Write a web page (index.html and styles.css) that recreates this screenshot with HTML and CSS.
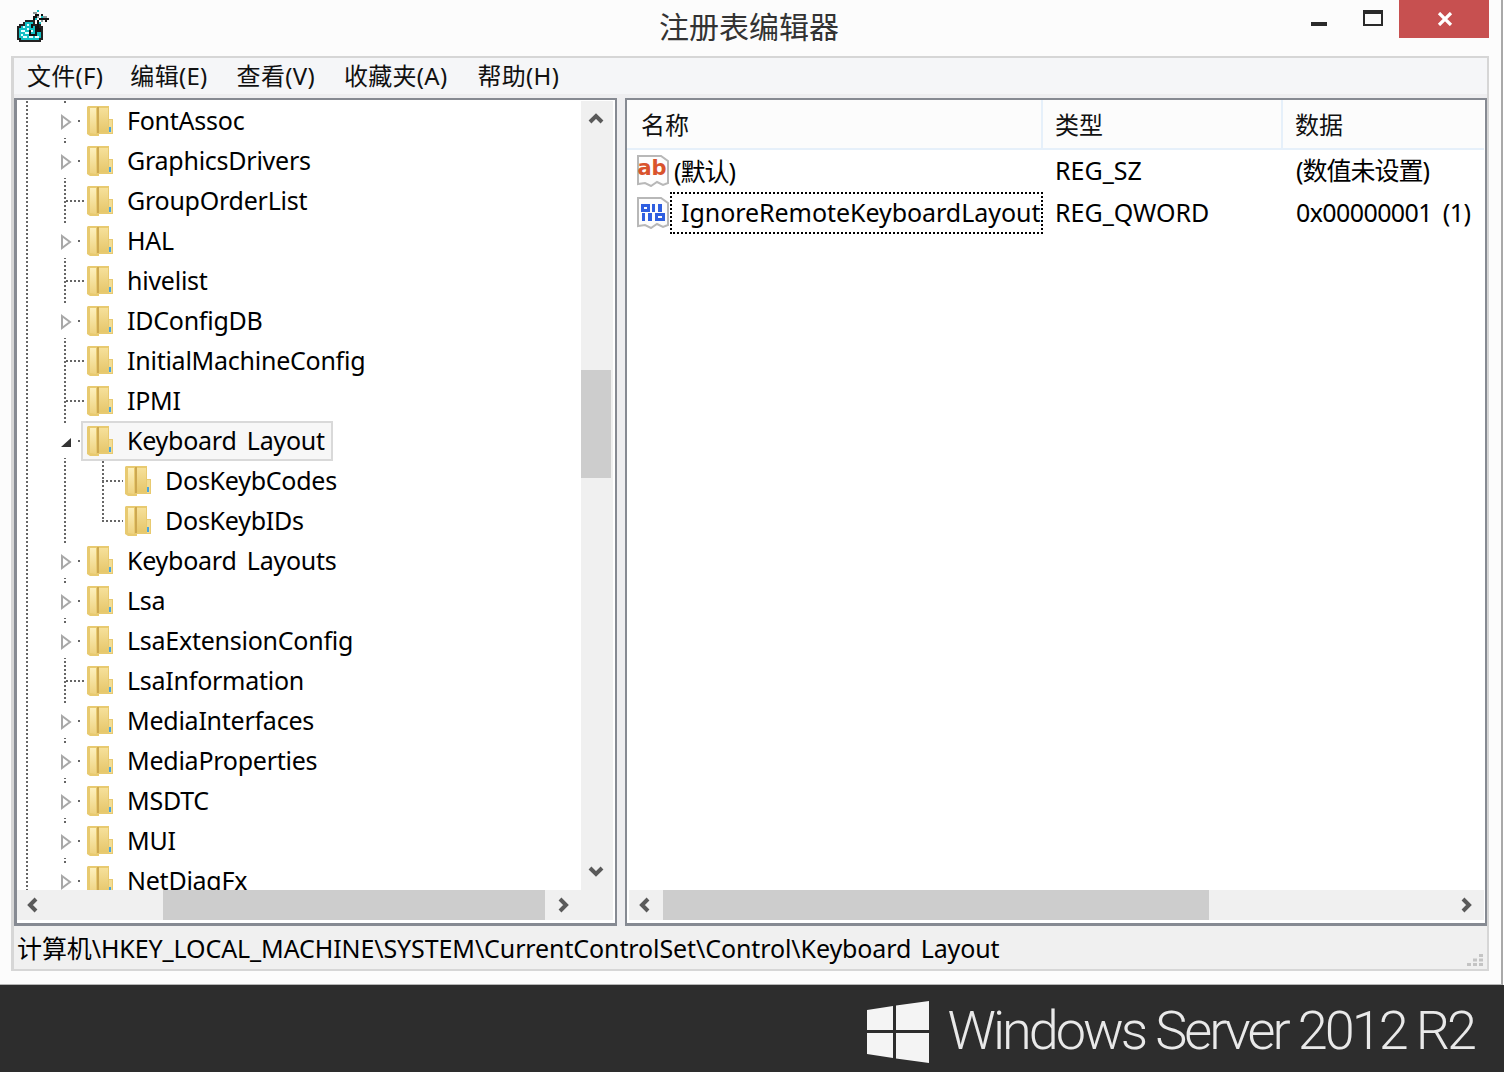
FILE: index.html
```html
<!DOCTYPE html>
<html lang="zh-CN">
<head>
<meta charset="utf-8">
<title>注册表编辑器</title>
<link rel="stylesheet" href="styles.css">
</head>
<body>
<svg class="defs" width="0" height="0" aria-hidden="true">
  <defs>
    <linearGradient id="fa" x1="0" y1="0" x2="0" y2="1"><stop offset="0" stop-color="#fdf0bd"/><stop offset="1" stop-color="#eed27f"/></linearGradient>
    <linearGradient id="fc" x1="0" y1="0" x2="0" y2="1"><stop offset="0" stop-color="#f6e09a"/><stop offset="1" stop-color="#e6c76b"/></linearGradient>
    <symbol id="folder" viewBox="0 0 26 32">
      <path d="M1 1H22V14H26V29H12V31H3L0 29V2Z" fill="#e8ca70"/>
      <path d="M3 3H9V29L3 28Z" fill="url(#fa)"/>
      <path d="M10 2H12V28H10Z" fill="#cda850"/>
      <path d="M12 3H21V27H12Z" fill="url(#fc)"/>
      <path d="M22 15H25V28H22Z" fill="#f3dc92"/>
      <path d="M22 22H24V27H22Z" fill="#4aa6dc"/>
    </symbol>
    <symbol id="tri" viewBox="0 0 12 16"><path d="M2 2L10 8L2 14Z" fill="#fff" stroke="#a8a8a8" stroke-width="2"/></symbol>
    <symbol id="page" viewBox="0 0 32 32">
      <path d="M1 1H24L31 6V28L26 30L20 27L14 31L8 28L1 29Z" fill="#fdfdfd" stroke="#b8b8b8" stroke-width="2"/>
    </symbol>
  </defs>
</svg>

<div class="window">
  <header class="titlebar">
    <div class="appicon">
      <svg width="32" height="32" viewBox="0 0 32 32" shape-rendering="crispEdges">
        <path d="M8 10H18V14H24V16H26V30H24V32H2V30H0V16H2V14H6V12H8Z" fill="#222"/>
        <path d="M8 12H16V16H22V18H24V28H22V30H4V28H2V18H4V16H8Z" fill="#10c0c4"/>
        <path d="M6 16H8V18H6ZM10 14H12V16H10ZM4 20H8V22H4ZM10 18H12V20H10ZM8 22H12V24H8ZM4 24H6V26H4ZM12 26H16V28H12ZM6 26H10V28H6ZM14 20H16V22H14ZM18 26H22V28H18Z" fill="#e6ffff"/>
        <path d="M12 20H14V24H18V16H20V10H22V18H24V22H20V26H12ZM14 14H16V18H14Z" fill="#111"/>
        <path d="M16 2H20V4H16ZM20 6H22V8H20ZM26 6H30V8H26ZM24 10H26V12H24Z" fill="#8d9a9a"/>
        <path d="M18 4H22V6H18ZM16 6H20V10H16ZM24 4H26V6H24ZM26 8H32V10H26ZM22 8H26V10H22ZM28 10H30V12H28Z" fill="#111"/>
        <path d="M20 0H22V2H20ZM18 8H20V10H18ZM24 6H26V8H24ZM22 12H24V14H22Z" fill="#10c0c4"/>
      </svg>
    </div>
    <h1 class="title">注册表编辑器</h1>
    <div class="controls">
      <span class="ctl-min"></span>
      <span class="ctl-max"></span>
      <span class="ctl-close">
        <svg width="16" height="14" viewBox="0 0 16 14"><path d="M2 1L14 13M14 1L2 13" stroke="#fff" stroke-width="3.200" fill="none"/></svg>
      </span>
    </div>
  </header>

  <div class="frame">
    <nav class="menubar">
      <span class="menu m1">文件(F)</span>
      <span class="menu m2">编辑(E)</span>
      <span class="menu m3">查看(V)</span>
      <span class="menu m4">收藏夹(A)</span>
      <span class="menu m5">帮助(H)</span>
    </nav>
    <div class="panes">
      <section class="pane tree-pane">
        <div class="tree">
          <div class="row"><span class="exp"><svg class="tri"><use href="#tri"/></svg></span><span class="stub"></span><span class="node"><svg class="folder"><use href="#folder"/></svg><span>FontAssoc</span></span></div>
          <div class="row"><span class="exp"><svg class="tri"><use href="#tri"/></svg></span><span class="stub"></span><span class="node"><svg class="folder"><use href="#folder"/></svg><span>GraphicsDrivers</span></span></div>
          <div class="row leaf"><span class="stub"></span><span class="node"><svg class="folder"><use href="#folder"/></svg><span>GroupOrderList</span></span></div>
          <div class="row"><span class="exp"><svg class="tri"><use href="#tri"/></svg></span><span class="stub"></span><span class="node"><svg class="folder"><use href="#folder"/></svg><span>HAL</span></span></div>
          <div class="row leaf"><span class="stub"></span><span class="node"><svg class="folder"><use href="#folder"/></svg><span>hivelist</span></span></div>
          <div class="row"><span class="exp"><svg class="tri"><use href="#tri"/></svg></span><span class="stub"></span><span class="node"><svg class="folder"><use href="#folder"/></svg><span>IDConfigDB</span></span></div>
          <div class="row leaf"><span class="stub"></span><span class="node"><svg class="folder"><use href="#folder"/></svg><span>InitialMachineConfig</span></span></div>
          <div class="row leaf"><span class="stub"></span><span class="node"><svg class="folder"><use href="#folder"/></svg><span>IPMI</span></span></div>
          <div class="row open"><span class="exp"><svg class="tri" viewBox="0 0 12 16"><path d="M1 13L11 4V13Z" fill="#333"/></svg></span><span class="stub"></span><span class="node selected"><svg class="folder"><use href="#folder"/></svg><span>Keyboard Layout</span></span></div>
          <div class="row child"><span class="stub"></span><span class="node"><svg class="folder"><use href="#folder"/></svg><span>DosKeybCodes</span></span></div>
          <div class="row child last"><span class="stub"></span><span class="node"><svg class="folder"><use href="#folder"/></svg><span>DosKeybIDs</span></span></div>
          <div class="row"><span class="exp"><svg class="tri"><use href="#tri"/></svg></span><span class="stub"></span><span class="node"><svg class="folder"><use href="#folder"/></svg><span>Keyboard Layouts</span></span></div>
          <div class="row"><span class="exp"><svg class="tri"><use href="#tri"/></svg></span><span class="stub"></span><span class="node"><svg class="folder"><use href="#folder"/></svg><span>Lsa</span></span></div>
          <div class="row"><span class="exp"><svg class="tri"><use href="#tri"/></svg></span><span class="stub"></span><span class="node"><svg class="folder"><use href="#folder"/></svg><span>LsaExtensionConfig</span></span></div>
          <div class="row leaf"><span class="stub"></span><span class="node"><svg class="folder"><use href="#folder"/></svg><span>LsaInformation</span></span></div>
          <div class="row"><span class="exp"><svg class="tri"><use href="#tri"/></svg></span><span class="stub"></span><span class="node"><svg class="folder"><use href="#folder"/></svg><span>MediaInterfaces</span></span></div>
          <div class="row"><span class="exp"><svg class="tri"><use href="#tri"/></svg></span><span class="stub"></span><span class="node"><svg class="folder"><use href="#folder"/></svg><span>MediaProperties</span></span></div>
          <div class="row"><span class="exp"><svg class="tri"><use href="#tri"/></svg></span><span class="stub"></span><span class="node"><svg class="folder"><use href="#folder"/></svg><span>MSDTC</span></span></div>
          <div class="row"><span class="exp"><svg class="tri"><use href="#tri"/></svg></span><span class="stub"></span><span class="node"><svg class="folder"><use href="#folder"/></svg><span>MUI</span></span></div>
          <div class="row"><span class="exp"><svg class="tri"><use href="#tri"/></svg></span><span class="stub"></span><span class="node"><svg class="folder"><use href="#folder"/></svg><span>NetDiagFx</span></span></div>
        </div>
        <div class="vscroll">
          <svg class="arrow" width="16" height="12" viewBox="0 0 16 12"><path d="M2 9L8 3L14 9" class="chev"/></svg>
          <div class="vtrack"><div class="vthumb"></div></div>
          <svg class="arrow" width="16" height="12" viewBox="0 0 16 12"><path d="M2 3L8 9L14 3" class="chev"/></svg>
        </div>
        <div class="hscroll tree-h">
          <svg class="harrow" width="12" height="16" viewBox="0 0 12 16"><path d="M9 2L3 8L9 14" class="chev"/></svg>
          <div class="htrack"><div class="hthumb"></div></div>
          <svg class="harrow" width="12" height="16" viewBox="0 0 12 16"><path d="M3 2L9 8L3 14" class="chev"/></svg>
        </div>
      </section>

      <section class="pane list-pane">
        <div class="list">
          <div class="list-head">
            <div class="col-head">名称</div>
            <div class="col-head">类型</div>
            <div class="col-head">数据</div>
          </div>
          <div class="list-row">
            <div class="name-cell">
              <svg class="val-icon" viewBox="0 0 32 32"><use href="#page"/><text x="15" y="20" class="ab">ab</text></svg>
              <span class="name-text cjk">(默认)</span>
            </div>
            <div class="cell">REG_SZ</div>
            <div class="cell data cjk">(数值未设置)</div>
          </div>
          <div class="list-row">
            <div class="name-cell">
              <svg class="val-icon" viewBox="0 0 32 32"><use href="#page"/>
                <path d="M5.500 8.500H11.500V13.500H5.500ZM19.500 17.500H26.500V22.500H19.500Z" fill="none" stroke="#2f5fe0" stroke-width="3"/>
                <path d="M15 7H18V15H15ZM21 7H25V15H21ZM5 16H8V24H5ZM11 16H15V24H11Z" fill="#2f5fe0"/>
              </svg>
              <span class="name-text focus">IgnoreRemoteKeyboardLayout</span>
            </div>
            <div class="cell">REG_QWORD</div>
            <div class="cell data">0x00000001 (1)</div>
          </div>
        </div>
        <div class="hscroll list-h">
          <svg class="harrow" width="12" height="16" viewBox="0 0 12 16"><path d="M9 2L3 8L9 14" class="chev"/></svg>
          <div class="htrack"><div class="hthumb"></div></div>
          <svg class="harrow" width="12" height="16" viewBox="0 0 12 16"><path d="M3 2L9 8L3 14" class="chev"/></svg>
        </div>
      </section>
    </div>
    <footer class="statusbar">
      <span class="path">计算机\HKEY_LOCAL_MACHINE\SYSTEM\CurrentControlSet\Control\Keyboard Layout</span>
      <svg class="grip" width="16" height="12" viewBox="0 0 16 12"><path d="M12 0h4v3h-4zM6 4.500h4v3H6zM12 4.500h4v3h-4zM0 9h4v3H0zM6 9h4v3H6zM12 9h4v3h-4z" fill="#c4c4c4"/></svg>
    </footer>
  </div>
</div>

<div class="brandbar">
  <svg class="winlogo" width="62" height="62" viewBox="0 0 62 62"><path d="M0 9L26 5V29H0ZM29 4.500L62 0V29H29ZM0 32H26V57L0 53ZM29 32H62V62L29 57.500Z" fill="#f4f4f4"/></svg>
  <span class="brandtext">Windows Server 2012 R2</span>
</div>
</body>
</html>
```
FILE: styles.css
```css
* { box-sizing: border-box; }
html, body { margin: 0; padding: 0; }
body {
  width: 1504px;
  height: 1072px;
  overflow: hidden;
  background: #fff;
  display: flex;
  flex-direction: column;
  font-family: "Noto Sans", "Noto Sans CJK SC", sans-serif;
  color: #000;
}
.defs { position: absolute; }

.window {
  width: 1503px;
  height: 985px;
  background: #fcfcfc;
  border-right: 2px solid #a9a9a9;
  border-bottom: 1px solid #b5b5b5;
  display: flex;
  flex-direction: column;
}

/* title bar */
.titlebar {
  height: 56px;
  display: grid;
  grid-template-columns: 1fr auto 1fr;
  flex: none;
}
.appicon { padding: 10px 0 0 17px; height: 42px; }
.appicon svg { display: block; }
.title {
  margin: 0 3px 0 0;
  font: 400 30px/50px "Noto Sans CJK SC", sans-serif;
  color: #333;
}
.controls { display: flex; justify-content: flex-end; align-items: flex-start; padding-right: 12px; }
.ctl-min { width: 16px; height: 4px; margin-top: 22px; background: #2a2a2a; }
.ctl-max { width: 20px; height: 16px; margin: 10px 16px 0 36px; border: 2px solid #2a2a2a; border-top-width: 4px; }
.ctl-close { width: 90px; height: 38px; background: #c75050; display: flex; align-items: center; justify-content: center; padding-left: 2px; }

/* frame */
.frame {
  margin-left: 11px;
  width: 1478px;
  height: 915px;
  flex: none;
  border: solid #d6d6d6;
  border-width: 2px 2px 2px 3px;
  background: #f0f0f0;
  display: flex;
  flex-direction: column;
}
.menubar {
  height: 36px;
  flex: none;
  background: #f5f6f8;
  display: flex;
  align-items: flex-start;
  font-size: 24px;
  line-height: 36px;
  padding-left: 13px;
  color: #111;
  letter-spacing: .3px;
}
.menu { white-space: nowrap; }
.m1 { margin-right: 27px; }
.m2 { margin-right: 29px; }
.m3 { margin-right: 29px; }
.m4 { margin-right: 30px; }

.panes {
  flex: none;
  height: 832px;
  padding-top: 4px;
  background: #eeeef0;
  display: flex;
  gap: 8px;
}
.pane {
  height: 828px;
  background: #fff;
  border: solid #868a92;
  display: grid;
}
.tree-pane {
  width: 603px;
  border-width: 2px 2px 3px 3px;
  padding: 1px 2px 3px 0;
  grid-template-columns: 1fr 32px;
  grid-template-rows: 789px 30px;
}
.list-pane {
  width: 862px;
  border-width: 2px 2px 3px 2px;
  padding: 0 1px 3px 2px;
  grid-template-rows: 1fr 30px;
}

/* tree */
.tree {
  position: relative;
  overflow: hidden;
  font-size: 25px;
  letter-spacing: -.25px;
  word-spacing: 4px;
}
.tree::before {
  content: "";
  position: absolute;
  left: 9px; top: 0; bottom: 0;
  width: 2px;
  background: repeating-linear-gradient(to bottom, #666 0 2px, transparent 2px 4px);
}
.row {
  position: relative;
  height: 40px;
  display: flex;
  align-items: center;
  padding-left: 41px;
  white-space: nowrap;
}
.row::before {
  content: "";
  position: absolute;
  left: 47px; top: 0; bottom: 0;
  width: 2px;
  background: repeating-linear-gradient(to bottom, #666 0 2px, transparent 2px 4px);
}
.exp {
  position: relative;
  width: 16px;
  height: 34px;
  padding-top: 2px;
  background: #fff;
  display: flex;
  align-items: center;
  justify-content: center;
  flex: none;
}
.tri { width: 12px; height: 16px; }
.stub {
  width: 11px;
  height: 2px;
  margin-right: -4px;
  flex: none;
  background: repeating-linear-gradient(to right, transparent 0 4px, #666 4px 6px, transparent 6px 8px);
}
.leaf .stub {
  width: 19px;
  margin-left: 8px;
  background: repeating-linear-gradient(to right, #666 0 2px, transparent 2px 4px);
}
.child { padding-left: 85px; }
.child .stub {
  width: 21px;
  background: repeating-linear-gradient(to right, #666 0 2px, transparent 2px 4px);
}
.child::after {
  content: "";
  position: absolute;
  left: 85px; top: 0; height: 100%;
  width: 2px;
  background: repeating-linear-gradient(to bottom, #666 0 2px, transparent 2px 4px);
}
.child.last::after { height: 21px; }
.node {
  position: relative;
  height: 40px;
  display: flex;
  align-items: center;
  gap: 14px;
  padding: 0 6px 0 4px;
  border: 2px solid transparent;
  flex: none;
}
.node > span { margin-top: -2px; }
.selected { background: #f7f7f7; border-color: #d9d9d9; }
.folder { width: 26px; height: 32px; flex: none; }

/* scrollbars */
.vscroll {
  grid-column: 2;
  grid-row: 1;
  background: #f0f0f0;
  display: flex;
  flex-direction: column;
  align-items: center;
  padding-right: 2px;
}
.arrow { flex: none; margin: 12px 0 7px; }
.vscroll .arrow:last-child { margin: 0 0 13px; height: 12px; }
.vtrack { flex: 1; width: 100%; padding-top: 238px; }
.vthumb { height: 108px; background: #cdcdcd; }
.hscroll {
  background: #f0f0f0;
  display: flex;
  align-items: center;
}
.tree-h { grid-column: 1 / 3; grid-row: 2; }
.harrow { flex: none; margin: 0 10px; }
.tree-h .harrow:last-child { margin: 0 44px 0 12px; }
.htrack { flex: 1; align-self: stretch; display: flex; }
.hthumb { background: #cdcdcd; }
.tree-h .hthumb { margin-left: 114px; width: 382px; }
.list-h .hthumb { width: 546px; margin-left: 2px; }
.list-h .harrow:last-child { margin-right: 12px; }
.chev { fill: none; stroke: #5a5a5a; stroke-width: 4; }

/* list */
.list { background: #fff; }
.list-head { display: grid; grid-template-columns: 414px 240px 1fr; }
.list-row { display: grid; grid-template-columns: 414px 239px 1fr; }
.list-head { height: 50px; background: #fcfcfc; border-bottom: 2px solid #e6f0fa; margin-left: -2px; padding-left: 2px; }
.col-head {
  font: 400 24px/48px "Noto Sans CJK SC", sans-serif;
  padding-left: 12px;
  border-right: 2px solid #e6f0fa;
  color: #111;
}
.col-head:last-child { border-right: 0; }
.list-row { height: 42px; font-size: 25px; line-height: 40px; white-space: nowrap; }
.name-cell { display: flex; align-items: center; padding-left: 8px; min-width: 0; }
.val-icon { width: 32px; height: 32px; flex: none; }
.ab { font: 700 21px "DejaVu Sans", sans-serif; fill: #d9532c; text-anchor: middle; }
.name-text { margin-left: 5px; flex: none; }
.focus {
  margin-left: 1px;
  height: 42px;
  line-height: 36px;
  width: 373px;
  padding-left: 9px;
  border: 2px dotted #000;
  letter-spacing: -.05px;
}
.cell { padding-left: 12px; }
.data { padding-left: 14px; letter-spacing: -.6px; word-spacing: 5px; }
.cjk { letter-spacing: -1px; }

/* status bar */
.statusbar {
  flex: 1;
  background: #f0f0f0;
  display: flex;
  align-items: center;
  justify-content: space-between;
  padding: 0 4px 0 3px;
  font-size: 25px;
  letter-spacing: -.1px;
  word-spacing: 3px;
  white-space: nowrap;
}
.path { margin-top: -2px; }
.grip { align-self: flex-end; margin-bottom: 3px; }

/* brand */
.brandbar {
  flex: 1;
  background: #2d2d2d;
  display: flex;
  align-items: center;
  justify-content: flex-end;
  gap: 19px;
  padding-right: 30px;
}
.winlogo { margin-top: 6px; flex: none; }
.brandtext {
  font: 300 54px/1 "Roboto", sans-serif;
  color: #e9e9e9;
  letter-spacing: -3px;
  margin-top: 5px;
  white-space: nowrap;
}
```
